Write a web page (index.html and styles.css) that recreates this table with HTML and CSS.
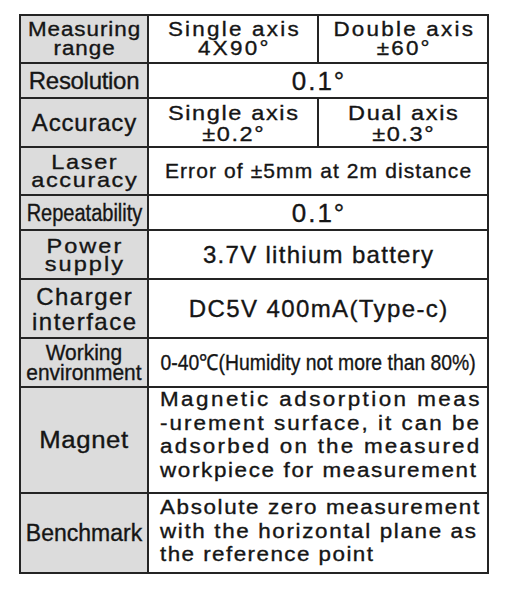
FILE: index.html
```html
<!DOCTYPE html>
<html>
<head>
<meta charset="utf-8">
<link rel="stylesheet" href="styles.css">
</head>
<body>
<div class="spec">
  <div class="lab"><span class="wide l-meas">Measuring<br>range</span></div>
  <div class="val"><span class="wide v-axis">Single axis<br>4X90°</span></div>
  <div class="val"><span class="wide v-axis">Double axis<br>±60°</span></div>

  <div class="lab"><span class="l-res">Resolution</span></div>
  <div class="val span2"><span class="v-big">0.1°</span></div>

  <div class="lab"><span class="l-acc">Accuracy</span></div>
  <div class="val"><span class="wide v-acc">Single axis<br>±0.2°</span></div>
  <div class="val"><span class="wide v-acc">Dual axis<br>±0.3°</span></div>

  <div class="lab"><span class="wide l-laser">Laser<br>accuracy</span></div>
  <div class="val span2"><span class="v-err">Error of ±5mm at 2m distance</span></div>

  <div class="lab"><span class="l-rep">Repeatability</span></div>
  <div class="val span2"><span class="v-big">0.1°</span></div>

  <div class="lab"><span class="wide l-power">Power<br>supply</span></div>
  <div class="val span2"><span class="v-bat">3.7V lithium battery</span></div>

  <div class="lab"><span class="l-charger">Charger<br>interface</span></div>
  <div class="val span2"><span class="v-dc">DC5V 400mA(Type-c)</span></div>

  <div class="lab"><span class="l-work">Working<br>environment</span></div>
  <div class="val span2"><span class="v-env">0-40℃(Humidity not more than 80%)</span></div>

  <div class="lab"><span class="wide l-mag">Magnet</span></div>
  <div class="val span2 para p-mag">
    <div class="v-para">
      <span class="ln m1">Magnetic adsorption meas</span>
      <span class="ln m2">-urement surface, it can be</span>
      <span class="ln m3">adsorbed on the measured</span>
      <span class="ln m4">workpiece for measurement</span>
    </div>
  </div>

  <div class="lab"><span class="l-bench">Benchmark</span></div>
  <div class="val span2 para p-bench">
    <div class="v-para">
      <span class="ln b1">Absolute zero measurement</span>
      <span class="ln b2">with the horizontal plane as</span>
      <span class="ln b3">the reference point</span>
    </div>
  </div>
</div>
</body>
</html>
```
FILE: styles.css
```css
html, body {
  margin: 0;
  padding: 0;
  background: #ffffff;
}

body {
  font-family: "Liberation Sans", Arial, sans-serif;
  color: #151515;
  -webkit-text-stroke: 0.35px #151515;
}

.spec {
  display: grid;
  grid-template-columns: 126px 168px 168px;
  grid-template-rows: 46px 33px 47px 46px 33px 47px 57px 47px 104px 78px;
  gap: 2px;
  padding: 2px;
  width: 470px;
  box-sizing: border-box;
  margin: 14px 0 0 19px;
  background: #242424;
}

.lab, .val {
  display: flex;
  align-items: center;
  justify-content: center;
  text-align: center;
  white-space: nowrap;
  overflow: hidden;
}

.lab {
  background: #dcdcdc;
}

.val {
  background: #ffffff;
}

.span2 {
  grid-column: span 2;
}

.lab span, .val span {
  display: inline-block;
}

/* extended glyphs, as in the reference */
.wide {
  transform: scaleX(1.12);
}

/* labels */
.l-meas { font-size: 20px; line-height: 19px; letter-spacing: 0.85px; margin-right: -0.85px; }
.l-res { font-size: 24px; line-height: 26px; letter-spacing: -0.3px; }
.l-acc { font-size: 24px; line-height: 26px; letter-spacing: 0.8px; margin-right: -0.8px; }
.l-laser { font-size: 21px; line-height: 18px; letter-spacing: 1.45px; margin-right: -1.45px; }
.l-rep { font-size: 23px; line-height: 26px; transform: scaleX(0.87); }
.l-power { font-size: 21px; line-height: 18px; letter-spacing: 1.85px; margin-right: -1.85px; }
.l-charger { font-size: 24px; line-height: 25px; letter-spacing: 1.5px; margin-right: -1.5px; }
.l-work { font-size: 22.5px; line-height: 20px; transform: scaleX(0.93); }
.l-mag { font-size: 23px; line-height: 26px; letter-spacing: 0.55px; margin-right: -0.55px; }
.l-bench { font-size: 23px; line-height: 26px; }

/* values */
.v-axis { font-size: 20px; line-height: 19px; letter-spacing: 2px; margin-right: -2px; }
.v-big { font-size: 26px; line-height: 28px; letter-spacing: 2px; margin-right: -2px; }
.v-acc { font-size: 21px; line-height: 21px; letter-spacing: 1.45px; margin-right: -1.45px; }
.v-err { font-size: 21px; line-height: 24px; letter-spacing: 1.1px; margin-right: -1.1px; }
.v-bat { font-size: 24px; line-height: 26px; letter-spacing: 1.3px; margin-right: -1.3px; }
.v-dc { font-size: 24px; line-height: 26px; letter-spacing: 1.4px; margin-right: -1.4px; }
.v-env { font-size: 22px; line-height: 24px; transform: scaleX(0.88); }

.para {
  justify-content: flex-start;
  align-items: flex-start;
  text-align: left;
  padding-left: 11px;
}

.p-mag { padding-top: 0; }
.p-bench { padding-top: 2px; }

.v-para { font-size: 20px; line-height: 23.5px; }
.v-para .ln {
  display: block;
  transform: scaleX(1.12);
  transform-origin: left center;
}

.m1 { letter-spacing: 2.2px; }
.m2 { letter-spacing: 1.8px; }
.m3 { letter-spacing: 2px; }
.m4 { letter-spacing: 1.47px; }
.b1 { letter-spacing: 1.45px; }
.b2 { letter-spacing: 1.47px; }
.b3 { letter-spacing: 1.3px; }
```
